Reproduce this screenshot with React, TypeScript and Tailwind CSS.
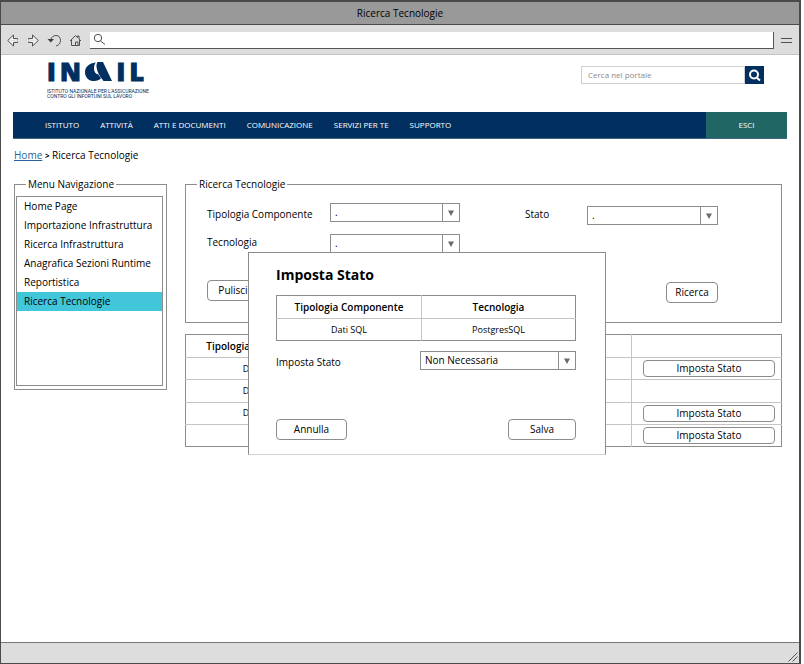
import type { ReactNode } from "react";

const NAV = ["ISTITUTO", "ATTIVITÀ", "ATTI E DOCUMENTI", "COMUNICAZIONE", "SERVIZI PER TE", "SUPPORTO"];

const MENU = [
  "Home Page",
  "Importazione Infrastruttura",
  "Ricerca Infrastruttura",
  "Anagrafica Sezioni Runtime",
  "Reportistica",
  "Ricerca Tecnologie",
];

const ROWS = [
  { tipo: "Dati SQL", action: true },
  { tipo: "Dati SQL", action: false },
  { tipo: "Dati SQL", action: true },
  { tipo: "", action: true },
];

function Button({ className, children }: { className: string; children: ReactNode }) {
  return (
    <button
      type="button"
      className={`flex items-center justify-center rounded-[4px] border border-[#8c8c8c] bg-white ${className}`}
    >
      {children}
    </button>
  );
}

function Select({ id, value, className }: { id: string; value: string; className: string }) {
  return (
    <div className={`relative h-[19px] border border-[#8c8c8c] bg-white ${className}`}>
      <select id={id} defaultValue={value} className="block h-full w-full appearance-none bg-transparent pr-5 pl-1 outline-none">
        <option>{value}</option>
      </select>
      <span className="pointer-events-none absolute inset-y-0 right-0 flex w-[17px] items-center justify-center border-l border-[#8c8c8c]">
        <svg width="6" height="6" viewBox="0 0 6 6" aria-hidden="true">
          <path d="M0 0.5h6L3 6z" fill="#6b6b6b" />
        </svg>
      </span>
    </div>
  );
}

function Toolbar() {
  return (
    <div className="flex h-[30px] items-center border-b border-[#c4c4c4] bg-[#dddddd] pt-px pr-[7px] pl-[6px]">
      <div className="flex items-center gap-[7px]">
        <button type="button" aria-label="Indietro">
          <svg width="13" height="13" viewBox="0 0 13 13" fill="#f0f0f0" stroke="#505050" className="block">
            <path d="M0.7 6.5L6.5 1v3.5H10.5V5.5M10.5 7.5V8.5H6.5V12L0.7 6.5" />
          </svg>
        </button>
        <button type="button" aria-label="Avanti">
          <svg width="13" height="13" viewBox="0 0 13 13" fill="#f0f0f0" stroke="#505050" className="block">
            <path d="M11.3 6.5L5.5 1v3.5H1.5V5.5M1.5 7.5V8.5H5.5V12L11.3 6.5" />
          </svg>
        </button>
        <button type="button" aria-label="Ricarica">
          <svg width="15" height="13" viewBox="0 0 15 13" fill="none" stroke="#505050" className="block">
            <path d="M4 5C4.5 3 6.5 1.5 9 1.5c3 0 4.500 2.200 4.500 5s-2 5-4.500 5.500" />
            <path d="M0.5 5h6.5L3.8 8.5z" fill="#404040" stroke="none" />
          </svg>
        </button>
        <button type="button" aria-label="Pagina iniziale">
          <svg width="13" height="13" viewBox="0 0 13 13" fill="none" stroke="#505050" className="block">
            <path d="M1 7L6.500 1.500L8.500 3.500V2h1.500v3L12 7M2.500 6v5.500h8V6M6.500 11.500V8h2.500v3.500" />
          </svg>
        </button>
      </div>
      <label className="ml-2 flex h-[17px] flex-1 items-center border-r border-b border-[#555] bg-white pl-[3px]">
        <svg width="13" height="13" viewBox="0 0 13 13" fill="none" stroke="#505050" className="mr-1">
          <circle cx="5" cy="5" r="3.7" />
          <path d="M7.5 8L12 11.5" />
        </svg>
        <input aria-label="Indirizzo" className="min-w-0 flex-1 bg-transparent outline-none" />
      </label>
      <button type="button" aria-label="Menu" className="ml-[7px] flex w-[11px] flex-col gap-[3px]">
        <span className="h-px w-full bg-[#505050]" />
        <span className="h-px w-full bg-[#505050]" />
      </button>
    </div>
  );
}

function Header() {
  return (
    <header>
      <div className="flex items-start justify-between pt-[7px] pr-[35px] pl-[46px]">
        <div className="text-[#012f60]">
          <div className="flex h-[19px] w-[97px] items-center justify-between text-[25px] leading-[19px] font-extrabold [-webkit-text-stroke:1px_#012f60]">
            <span>I</span>
            <span>N</span>
            <svg width="27" height="19" viewBox="0 0 27 19" aria-hidden="true" className="shrink-0" fill="#012f60">
              <path d="M12.5 0H18L27 19H18.5C14.5 14.5 12 9.5 11.5 5C11.4 3 11.7 1.5 12.5 0Z" />
              <path d="M10.8 0.5C4 1.2 0 5 0 10.2C0 15.5 4 19 9 19C12 19 14.5 18 16 16.2L13.3 12.5C10.5 12 9 9.5 9 6.5C9 4 9.6 2 10.8 0.5Z" />
            </svg>
            <span>I</span>
            <span>L</span>
          </div>
          <p className="mt-2 font-['Roboto',sans-serif] text-[5px] leading-[5px] whitespace-nowrap">
            ISTITUTO NAZIONALE PER L'ASSICURAZIONE
            <br />
            CONTRO GLI INFORTUNI SUL LAVORO
          </p>
        </div>
        <form className="mt-1 flex h-[18px] w-[183px]">
          <input
            aria-label="Cerca nel portale"
            placeholder="Cerca nel portale"
            className="min-w-0 flex-1 border border-[#cfcfcf] px-[6px] text-[8px] outline-none placeholder:text-[#8a8a8a]"
          />
          <button type="button" aria-label="Cerca" className="flex w-[19px] items-center justify-center bg-[#012f60]">
            <svg width="13" height="13" viewBox="0 0 13 13" fill="none" stroke="white" strokeWidth="2">
              <circle cx="6" cy="5.5" r="4" />
              <path d="M8.5 8.5L12 11.5" />
            </svg>
          </button>
        </form>
      </div>
      <nav className="mx-3 mt-[13px] flex h-[27px] border-b border-[#3d6a80] bg-[#012f60] text-[8px] text-white">
        <div className="flex flex-1 items-center gap-[21px] pl-8">
          {NAV.map((item) => (
            <a key={item} href="#" className="whitespace-nowrap">
              {item}
            </a>
          ))}
        </div>
        <a href="#" className="flex w-[81px] items-center justify-center bg-[#1f6664]">
          ESCI
        </a>
      </nav>
    </header>
  );
}

function Sidebar() {
  return (
    <fieldset className="h-[215px] w-[153px] shrink-0 border border-[#8c8c8c] px-px">
      <legend className="ml-[10px] px-[2px] leading-[18px]">Menu Navigazione</legend>
      <ul className="mt-[3px] mr-[2px] h-[190px] border border-[#8c8c8c]">
        {MENU.map((item) => (
          <li key={item} className={item === "Ricerca Tecnologie" ? "bg-[#41c6da]" : ""}>
            <a href="#" className="block pl-[7px] leading-[19px] whitespace-nowrap">
              {item}
            </a>
          </li>
        ))}
      </ul>
    </fieldset>
  );
}

function SearchPanel() {
  return (
    <fieldset className="h-[148px] border border-[#8c8c8c] pr-[63px] pl-[21px]">
      <legend className="-ml-[10px] px-[2px] leading-[18px]">Ricerca Tecnologie</legend>
      <div className="mt-[10px] flex items-start justify-between">
        <div className="grid grid-cols-[123px_130px] gap-y-[11px]">
          <label htmlFor="tipologia" className="pt-[2px] leading-[18px] whitespace-nowrap">
            Tipologia Componente
          </label>
          <Select id="tipologia" value="." className="w-full" />
          <label htmlFor="tecnologia" className="leading-4">
            Tecnologia
          </label>
          <Select id="tecnologia" value="." className="w-full" />
        </div>
        <div className="flex items-center">
          <label htmlFor="stato" className="w-[62px]">
            Stato
          </label>
          <Select id="stato" value="." className="mt-[3px] w-[131px]" />
        </div>
      </div>
      <div className="mt-[27px] flex justify-between">
        <Button className="h-[21px] w-[52px]">Pulisci</Button>
        <Button className="mt-[2px] h-[21px] w-[52px]">Ricerca</Button>
      </div>
    </fieldset>
  );
}

function Results() {
  return (
    <table className="mt-[11px] h-[113px] w-full table-fixed border-collapse border border-[#8c8c8c] text-center text-[9px]">
      <thead>
        <tr className="h-[23px] border-b border-[#c4c4c4]">
          <th className="w-[150px] p-0 pt-px text-[10px] font-semibold whitespace-nowrap">Tipologia Componente</th>
          <th className="p-0" />
          <th className="w-[150px] border-l border-[#c4c4c4] p-0" />
        </tr>
      </thead>
      <tbody>
        {ROWS.map((row, i) => (
          <tr key={i} className="h-[22px] border-b border-[#c4c4c4] last:border-[#8c8c8c]">
            <td className="p-0">{row.tipo}</td>
            <td className="p-0" />
            <td className="border-l border-[#c4c4c4] py-0 pr-[6px] pl-[11px]">
              {row.action && <Button className="h-[17px] w-full text-[10px]">Imposta Stato</Button>}
            </td>
          </tr>
        ))}
      </tbody>
    </table>
  );
}

function StatoDialog() {
  return (
    <section
      role="dialog"
      aria-labelledby="dialog-title"
      className="absolute top-[77px] left-[63px] w-[358px] border border-[#8c8c8c] border-b-[#d4d4d4] bg-white pt-3 pr-[29px] pb-[14px] pl-[27px]"
    >
      <h2 id="dialog-title" className="text-[14px] leading-5 font-bold">
        Imposta Stato
      </h2>
      <table className="mt-[10px] h-[46px] w-full table-fixed border-collapse border border-[#8c8c8c] text-center text-[9px]">
        <thead>
          <tr className="h-[23px] border-b border-[#c4c4c4] text-[10px]">
            <th className="w-[145px] p-0 pt-px font-semibold">Tipologia Componente</th>
            <th className="border-l border-[#c4c4c4] p-0 pt-px font-semibold">Tecnologia</th>
          </tr>
        </thead>
        <tbody>
          <tr className="h-[22px]">
            <td className="p-0">Dati SQL</td>
            <td className="border-l border-[#c4c4c4] p-0">PostgresSQL</td>
          </tr>
        </tbody>
      </table>
      <div className="mt-[10px] flex items-center justify-between">
        <label htmlFor="nuovo-stato" className="pt-1">
          Imposta Stato
        </label>
        <Select id="nuovo-stato" value="Non Necessaria" className="w-[156px]" />
      </div>
      <div className="mt-[49px] flex justify-between">
        <Button className="h-[21px] w-[71px]">Annulla</Button>
        <Button className="h-[21px] w-[68px]">Salva</Button>
      </div>
    </section>
  );
}

export default function App() {
  return (
    <div className="min-h-screen bg-white pr-[3px] font-['Open_Sans','Noto_Sans',sans-serif] text-[10px] text-black">
      <div className="flex min-h-screen flex-col border border-t-2 border-r-2 border-[#4a4a4a] bg-white">
        <div className="flex h-[23px] items-center justify-center border-b border-[#4a4a4a] bg-[#999999]">
          Ricerca Tecnologie
        </div>
        <Toolbar />
        <Header />
        <main className="flex-1 pr-[17px] pl-[13px]">
          <p className="mt-2 leading-4">
            <a href="#" className="text-[#2a6099] underline">
              Home
            </a>{" "}
            <span className="text-[8px] font-bold">&gt;</span> Ricerca Tecnologie
          </p>
          <div className="mt-[11px] flex items-start gap-[18px]">
            <Sidebar />
            <div className="relative min-w-0 flex-1">
              <SearchPanel />
              <Results />
              <StatoDialog />
            </div>
          </div>
        </main>
        <footer className="flex h-[21px] items-end justify-end border-t border-[#777] bg-[#dddddd] p-px">
          <svg width="10" height="10" viewBox="0 0 10 10" stroke="#505050" aria-hidden="true">
            <path d="M0.5 9.5L9.5 0.5M4.5 9.5L9.5 4.5" />
          </svg>
        </footer>
      </div>
    </div>
  );
}
